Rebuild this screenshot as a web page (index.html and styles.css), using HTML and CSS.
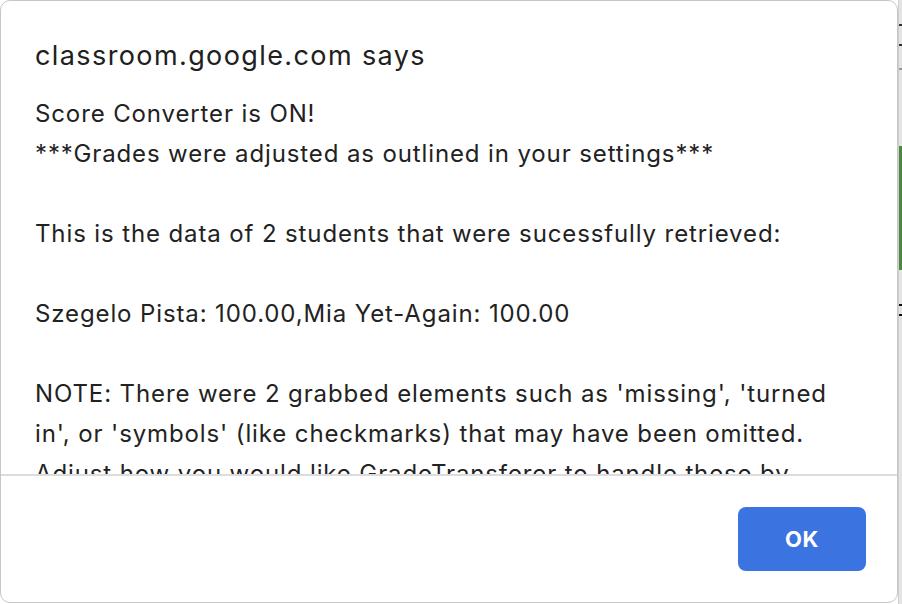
FILE: index.html
```html
<!DOCTYPE html>
<html>
<head>
<meta charset="utf-8">
<link rel="stylesheet" href="styles.css">
</head>
<body>
<div class="page">
  <div class="dialog">
    <div class="content">
      <h1 class="title">classroom.google.com says</h1>
      <div class="message">
        <p>Score Converter is ON!</p>
        <p>***Grades were adjusted as outlined in your settings***</p>
        <p class="blank">&nbsp;</p>
        <p>This is the data of 2 students that were sucessfully retrieved:</p>
        <p class="blank">&nbsp;</p>
        <p>Szegelo Pista: 100.00,Mia Yet-Again: 100.00</p>
        <p class="blank">&nbsp;</p>
        <p>NOTE: There were 2 grabbed elements such as 'missing', 'turned in', or 'symbols' (like checkmarks) that may have been omitted. Adjust how you would like GradeTransferer to handle these by going to the settings page.</p>
      </div>
    </div>
    <div class="footer">
      <button class="ok">OK</button>
    </div>
  </div>
  <div class="strip">
    <div class="box"></div>
    <div class="rule"></div>
    <div class="green"></div>
    <div class="mark"></div>
  </div>
</div>
</body>
</html>
```
FILE: styles.css
```css
* { box-sizing: border-box; }
html, body { margin: 0; padding: 0; }
body {
  width: 902px;
  height: 604px;
  overflow: hidden;
  background: #ffffff;
  font-family: Inter, "Liberation Sans", sans-serif;
  color: #222222;
}
.page {
  display: flex;
  height: 604px;
}
.dialog {
  width: 898px;
  height: 603px;
  background: #ffffff;
  border: 1px solid #c6c6c6;
  border-radius: 10px;
  display: flex;
  flex-direction: column;
  overflow: hidden;
}
.content {
  height: 475px;
  overflow: hidden;
  padding: 35px 46px 0 34px;
  border-bottom: 2px solid #dcdcde;
}
.title {
  margin: 0 0 18px 0;
  font-size: 27px;
  font-weight: 400;
  line-height: 40px;
  letter-spacing: 1.4px;
  color: #202020;
}
.message p {
  margin: 0;
  font-size: 24px;
  line-height: 40px;
  letter-spacing: 0.88px;
}
.footer {
  flex: 1;
  display: flex;
  justify-content: flex-end;
  align-items: flex-start;
  padding: 31px 31px 0 0;
}
.ok {
  width: 128px;
  height: 64px;
  border: none;
  border-radius: 8px;
  background: #3b74e0;
  color: #ffffff;
  font-family: Inter, "Liberation Sans", sans-serif;
  font-size: 22px;
  font-weight: 700;
  letter-spacing: 0.5px;
}
.strip {
  flex: 1;
  background: #e4e4e4;
  display: flex;
  flex-direction: column;
  border-left: 1px solid #cfcfcf;
}
.box {
  margin-top: 24px;
  height: 22px;
  border-top: 2px solid #333;
  border-bottom: 2px solid #333;
}
.rule {
  margin-top: 22px;
  height: 2px;
  background: #999;
}
.green {
  margin-top: 76px;
  height: 124px;
  background: #4b8a3e;
}
.mark {
  margin-top: 34px;
  height: 12px;
  border-top: 2px solid #111;
  border-bottom: 2px solid #111;
}
```
